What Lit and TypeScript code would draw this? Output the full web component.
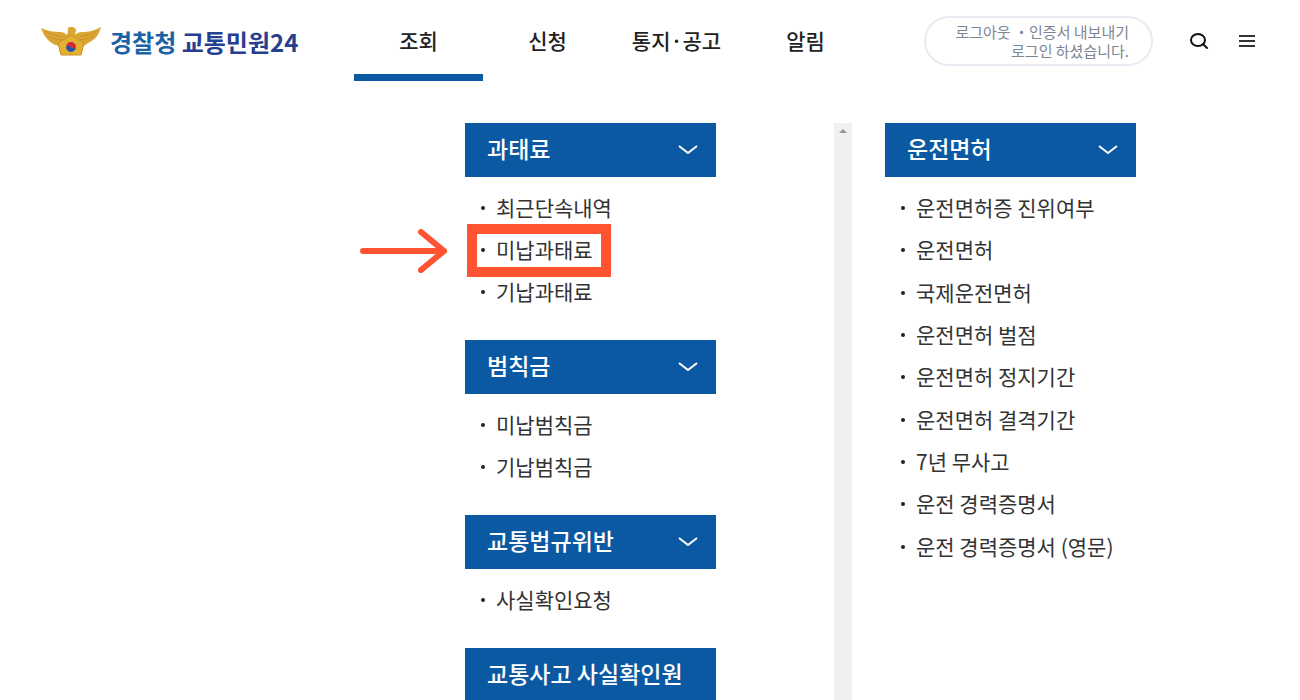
import { LitElement, html, css, svg, nothing } from "lit";
import { customElement, property } from "lit/decorators.js";
import { classMap } from "lit/directives/class-map.js";

interface MenuItem {
  label: string;
  marked?: boolean;
}

interface MenuGroup {
  title: string;
  expandable: boolean;
  items: MenuItem[];
}

const NAV = ["조회", "신청", "통지·공고", "알림"];

const MAIN_GROUPS: MenuGroup[] = [
  {
    title: "과태료",
    expandable: true,
    items: [{ label: "최근단속내역" }, { label: "미납과태료", marked: true }, { label: "기납과태료" }],
  },
  { title: "범칙금", expandable: true, items: [{ label: "미납범칙금" }, { label: "기납범칙금" }] },
  { title: "교통법규위반", expandable: true, items: [{ label: "사실확인요청" }] },
  { title: "교통사고 사실확인원", expandable: false, items: [] },
];

const LICENSE_GROUP: MenuGroup = {
  title: "운전면허",
  expandable: true,
  items: [
    { label: "운전면허증 진위여부" },
    { label: "운전면허" },
    { label: "국제운전면허" },
    { label: "운전면허 벌점" },
    { label: "운전면허 정지기간" },
    { label: "운전면허 결격기간" },
    { label: "7년 무사고" },
    { label: "운전 경력증명서" },
    { label: "운전 경력증명서 (영문)" },
  ],
};

const emblem = svg`
  <path d="M1 3 C8 6 14 7 20 7 C23 7 25 8 27 10 L28 7 C27 5 28 3 31 2 C34 2 36 3 36 6 L35 10 C37 8 39 7 42 7 C48 7 54 6 61 2 C59 10 55 15 48 18 C46 20 44 21 42 21 L42 29 H20 L19 21 C12 20 4 13 1 3 Z" fill="#dca634"/>
  <path d="M5 6 C11 10 17 10 23 12 M8 11 C13 14 17 14 22 15 M57 6 C51 10 45 10 39 12 M54 11 C49 14 45 14 40 15" fill="none" stroke="#c8922a" stroke-width="1"/>
  <path d="M31 10 L44 18 L41 30 H21 L18 18 Z" fill="#e3b02f" stroke="#c8922a" stroke-width="1"/>
  <path d="M28 3 C31 1 35 2 36 6 L33 6 L34 10 H28 Z" fill="#dca634"/>
  <path d="M26 22 A5 5 0 0 1 36 22 C34 25 32 22 31 22 C29 20 27 21 26 22 Z" fill="#d8233a"/>
  <path d="M26 22 A5 5 0 0 0 36 22 C34 25 32 22 31 22 C29 20 27 21 26 22 Z" fill="#2354a6"/>`;

@customElement("menu-group")
export class MenuGroupElement extends LitElement {
  @property({ attribute: false }) group!: MenuGroup;
  @property({ type: Boolean }) roomy = false;

  static styles = css`
    :host {
      display: block;
      max-width: 251px;
    }
    .title {
      display: flex;
      align-items: center;
      justify-content: space-between;
      width: 100%;
      height: 54px;
      box-sizing: border-box;
      margin: 0;
      padding: 0 18px 0 22px;
      border: 0;
      border-radius: 0;
      background: #0b59a3;
      color: #fff;
      font: inherit;
      font-size: 23px;
      font-weight: 500;
      line-height: 30px;
      white-space: nowrap;
      cursor: pointer;
    }
    .name {
      padding-bottom: 4px;
    }
    .chevron {
      width: 20px;
      height: 12px;
      flex: none;
    }
    .list {
      display: grid;
      grid-auto-rows: minmax(42px, 1fr);
      margin: 0;
      padding: 10px 0 27px;
      list-style: none;
    }
    .list.roomy {
      min-height: 381px;
    }
    .item {
      position: relative;
      display: flex;
      align-items: center;
      padding-left: 16px;
    }
    .item::before {
      content: "";
      width: 4px;
      height: 4px;
      margin-right: 11px;
      border-radius: 50%;
      background: #222;
    }
    .link {
      padding-bottom: 2px;
      color: #333;
      font-size: 21px;
      line-height: 30px;
      text-decoration: none;
      white-space: nowrap;
    }
    .frame {
      position: absolute;
      left: 2px;
      top: -5px;
      width: 144px;
      height: 53px;
      box-sizing: border-box;
      border: 10px solid #ff5331;
      pointer-events: none;
    }
    .arrow {
      position: absolute;
      left: -105px;
      top: 0;
      width: 88px;
      height: 44px;
      pointer-events: none;
    }
  `;

  render() {
    const { title, expandable, items } = this.group;
    return html`
      <button class="title" type="button">
        <span class="name">${title}</span>
        ${expandable
          ? html`<svg class="chevron" viewBox="0 0 20 12" aria-hidden="true">
              <path d="M1 2 L10 9 L19 2" fill="none" stroke="#fff" stroke-width="2" />
            </svg>`
          : nothing}
      </button>
      ${items.length
        ? html`<ul class=${classMap({ list: true, roomy: this.roomy })}>
            ${items.map(
              (item) => html`<li class="item">
                <a class="link" href="#">${item.label}</a>
                ${item.marked
                  ? html`<span class="frame"></span>
                      <svg class="arrow" viewBox="0 0 88 44" aria-hidden="true">
                        <path
                          d="M3 22 H84 M61 3 L84 22 L61 41"
                          fill="none"
                          stroke="#ff5331"
                          stroke-width="6"
                          stroke-linecap="round"
                          stroke-linejoin="round"
                        />
                      </svg>`
                  : nothing}
              </li>`
            )}
          </ul>`
        : nothing}
    `;
  }
}

@customElement("app-root")
export class AppRoot extends LitElement {
  static styles = css`
    :host {
      display: flex;
      flex-direction: column;
      height: 100vh;
      overflow: hidden;
      background: #fff;
      color: #222;
      font-family: "Noto Sans CJK KR", "Noto Sans", sans-serif;
    }
    .header {
      display: grid;
      grid-template-columns: minmax(300px, 1fr) 516px 430px;
      grid-template-rows: 81px;
      flex: none;
    }
    .brand {
      display: flex;
      align-items: center;
      gap: 8px;
      padding-left: 40px;
      color: #263f8f;
      font-size: 24px;
      font-weight: 700;
      line-height: 30px;
      text-decoration: none;
      white-space: nowrap;
    }
    .emblem {
      width: 62px;
      height: 32px;
      flex: none;
    }
    .wordmark {
      padding-top: 2px;
    }
    .agency {
      color: #1c62a5;
    }
    .nav {
      display: grid;
      grid-template-columns: repeat(4, 1fr);
    }
    .tab {
      display: flex;
      align-items: center;
      justify-content: center;
      box-sizing: border-box;
      padding-top: 6px;
      border-bottom: 7px solid transparent;
      color: #222;
      font-size: 21px;
      font-weight: 500;
      line-height: 30px;
      text-decoration: none;
      white-space: nowrap;
    }
    .tab.current {
      border-bottom-color: #0b59a3;
    }
    .tools {
      display: flex;
      align-items: center;
      padding-left: 54px;
    }
    .session {
      display: flex;
      flex-direction: column;
      justify-content: center;
      box-sizing: border-box;
      width: 229px;
      height: 50px;
      margin-right: 36px;
      padding-right: 22px;
      border: 2px solid #e9ebf3;
      border-radius: 25px;
      color: #7c8592;
      font-size: 15px;
      line-height: 19px;
      text-align: right;
      white-space: nowrap;
    }
    .session-link {
      color: inherit;
      text-decoration: none;
    }
    .icon-button {
      display: flex;
      width: 20px;
      height: 20px;
      margin: 0 28px 0 0;
      padding: 0;
      border: 0;
      background: none;
      cursor: pointer;
    }
    .icon {
      width: 20px;
      height: 20px;
    }
    .menu {
      display: grid;
      grid-template-columns: 336px 18px 251px;
      column-gap: 33px;
      justify-content: end;
      flex: 1;
      min-height: 0;
      padding: 42px 164px 0 0;
    }
    .track {
      background: #f0f0f0;
    }
    .up {
      display: block;
      width: 18px;
      height: 16px;
    }
  `;

  render() {
    return html`
      <header class="header">
        <a class="brand" href="#">
          <svg class="emblem" viewBox="0 0 62 32" aria-hidden="true">${emblem}</svg>
          <span class="wordmark"><span class="agency">경찰청</span> 교통민원24</span>
        </a>
        <nav class="nav">
          ${NAV.map((label, i) => html`<a class=${classMap({ tab: true, current: i === 0 })} href="#">${label}</a>`)}
        </nav>
        <div class="tools">
          <div class="session">
            <span>
              <a class="session-link" href="#">로그아웃</a> ・<a class="session-link" href="#">인증서 내보내기</a>
            </span>
            <span>로그인 하셨습니다.</span>
          </div>
          <button class="icon-button" type="button" aria-label="검색">
            <svg class="icon" viewBox="0 0 20 20" aria-hidden="true">
              <ellipse cx="9" cy="9" rx="7" ry="6" fill="none" stroke="#111" stroke-width="2" />
              <path d="M14 13 L18 17" fill="none" stroke="#111" stroke-width="2" stroke-linecap="round" />
            </svg>
          </button>
          <button class="icon-button" type="button" aria-label="전체 메뉴">
            <svg class="icon" viewBox="0 0 20 20" aria-hidden="true">
              <path d="M2 5 H18 M2 10 H18 M2 15 H18" fill="none" stroke="#333" stroke-width="2" />
            </svg>
          </button>
        </div>
      </header>
      <main class="menu">
        <div>${MAIN_GROUPS.map((group) => html`<menu-group .group=${group}></menu-group>`)}</div>
        <div class="track">
          <svg class="up" viewBox="0 0 18 16" aria-hidden="true"><path d="M5 10 L9 6 L13 10 Z" fill="#999" /></svg>
        </div>
        <menu-group .group=${LICENSE_GROUP} roomy></menu-group>
      </main>
    `;
  }
}
